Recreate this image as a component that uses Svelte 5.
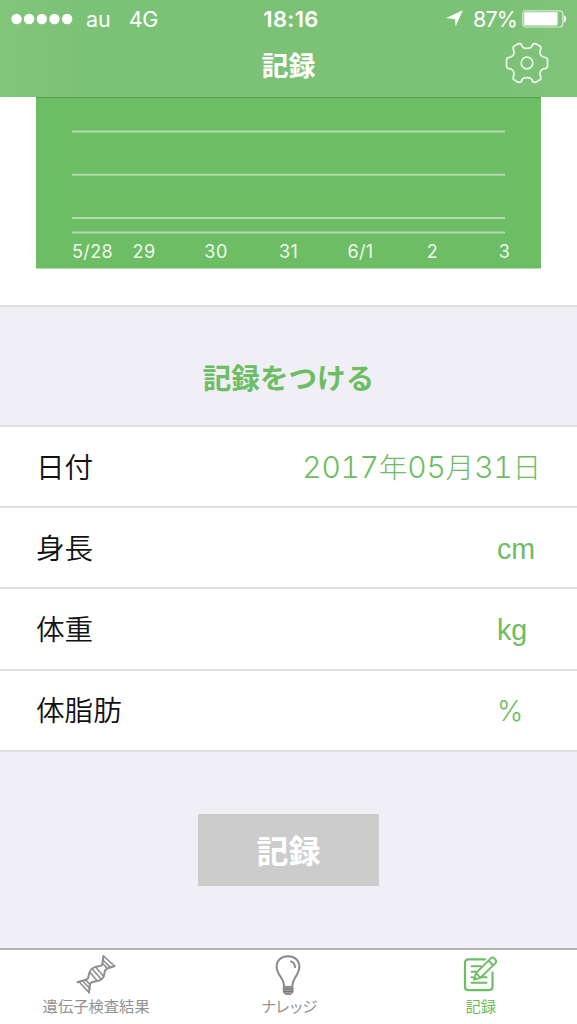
<script lang="ts">
  const gridLines = [34.5, 77.7, 120.9, 135.5]

  const days = [
    { label: '5/28', x: 56.5 },
    { label: '29', x: 108 },
    { label: '30', x: 180 },
    { label: '31', x: 252.5 },
    { label: '6/1', x: 324.5 },
    { label: '2', x: 396.5 },
    { label: '3', x: 468.5 },
  ]

  const date = [['2017', '年'], ['05', '月'], ['31', '日']]

  const fields = [
    { label: '身長', unit: 'cm' },
    { label: '体重', unit: 'kg' },
    { label: '体脂肪', unit: '%' },
  ]
</script>

<div class="screen">
  <header>
    <div class="status">
      <div class="left">
        <svg width="62" height="12" viewBox="0 0 62 12" fill="#fff">
          {#each [5.5, 18.1, 30.8, 43.5, 56.1] as cx}
            <circle {cx} cy="6" r="5.2" />
          {/each}
        </svg>
        <span class="carrier">au</span>
        <span class="network">4G</span>
      </div>
      <span class="time">18:16</span>
      <div class="right">
        <svg width="17" height="17" viewBox="0 0 17 17" fill="#fff">
          <path d="M16.8.2 9.6 16.6 9 9.2.2 8z" />
        </svg>
        <span class="percent">87%</span>
        <svg width="45" height="18" viewBox="0 0 45 18">
          <rect x=".8" y=".8" width="40" height="16.2" rx="3" fill="none" stroke="#d9eed7" stroke-width="1.2" />
          <rect x="2.2" y="2.2" width="33.4" height="13.4" rx="1" fill="#fff" />
          <path d="M41.8 5.3c3 .6 3 6.6 0 7.2z" fill="#fff" />
        </svg>
      </div>
    </div>
    <div class="nav">
      <h1>記録</h1>
      <svg class="gear" width="44" height="44" viewBox="-22 -22 44 44" fill="none" stroke="#eaf6e9" stroke-width="1.7" stroke-linejoin="round">
        <circle r="5.8" />
        <path d="M-13.8-16.2 -8.5-19.4 -5.8-18.8C-5-13.2 5-13.2 5.8-18.8L8.5-19.4 13.8-16.2 13.7-13.8C11.4-8.3 15-5.2 19.3-5.3L20.5-3.5V3.5L19.3 5.3C15 5.2 11.4 8.3 13.7 13.8L13.8 16.2 8.5 19.4 5.8 18.8C5 13.2-5 13.2-5.8 18.8L-8.5 19.4-13.8 16.2-13.7 13.8C-11.4 8.3-15 5.2-19.3 5.3L-20.5 3.5V-3.5L-19.3-5.3C-15-5.2-11.4-8.3-13.7-13.8z" />
      </svg>
    </div>
  </header>

  <section class="chart">
    <svg width="505" height="171.5" viewBox="0 0 505 171.5">
      <rect width="505" height="171.5" fill="#6cbd63" />
      <rect width="505" height="1.2" fill="#5a9e53" />
      {#each gridLines as y}
        <line x1="36" x2="469" y1={y} y2={y} />
      {/each}
      {#each days as day}
        <text x={day.x} y="161">{day.label}</text>
      {/each}
    </svg>
  </section>

  <h2>記録をつける</h2>

  <div class="form">
    <div class="row">
      <span>日付</span>
      <span class="date">{#each date as [num, kanji]}<b>{num}</b>{kanji}{/each}</span>
    </div>
    {#each fields as field}
      <div class="row">
        <span>{field.label}</span>
        <span class="unit" class:thin={field.unit === '%'}>{field.unit}</span>
      </div>
    {/each}
  </div>

  <div class="action">
    <button>記録</button>
  </div>

  <nav class="tabs">
    <div class="tab">
      <svg width="42" height="42" viewBox="0 0 42 42" fill="none" stroke="#8d8d8d" stroke-width="2" stroke-linecap="round">
        <path d="M2.5 28.2C12 25 13 27.5 14 20C15 14 19 12.5 25 12C29 11.5 27 7 28.5 2" />
        <path d="M14 38.5C15 31 13.5 28 20 27.5C26 27 29 25 29.5 19C30 13.5 34 14.5 39.5 12" />
        <path d="M28.5 2 39.5 12M27.8 6 35.5 13.3M27.8 9.8 32 13.8M21 13.5 28.7 22.5M17.3 15 26 25M14.8 18 21.8 26.5M8 27.5 15 34.5M11 26.5 15.3 30.7M4.5 28.2 14 38.5" stroke-width="1.6" />
      </svg>
      <span>遺伝子検査結果</span>
    </div>
    <div class="tab">
      <svg width="26" height="42" viewBox="0 0 26 42" fill="none" stroke="#858585" stroke-width="1.9">
        <path d="M9 32C9 24 1.6 21 1.6 12.5C1.6 6 6.5 2.2 13 2.2S24.4 6 24.4 12.5C24.4 21 17.4 24 17.4 32" />
        <path d="M15.3 7.2C18.5 8 20 10.5 20.2 14" stroke-width="1.8" />
        <path d="M8.3 32.4H18V38.5L15.5 40.5H11L8.3 38.5z" fill="#999" stroke-width="1" />
        <path d="M8 34.8H18.3M8 37.4H18.3" stroke="#777" stroke-width="1" />
      </svg>
      <span class="kana">ナレッジ</span>
    </div>
    <div class="tab active">
      <svg width="36" height="42" viewBox="0 0 36 42" fill="none" stroke="#6cbd63" stroke-width="2.2" stroke-linecap="round" stroke-linejoin="round">
        <path d="M22 5.3H5.5C3.2 5.3 2 6.5 2 8.8V32.7C2 35 3.2 36.2 5.5 36.2H26C28.2 36.2 29.5 35 29.5 32.7V18.5" />
        <path d="M11 25.5 13 19.2 28 4.2C29.9 2.3 34.7 6.5 32.7 8.9L17.5 23.8zM25.5 6.7 30.3 11.3M13 19.2 17.5 23.8" stroke-width="1.9" />
        <path d="M8.5 12.3H18M8.5 17.8H13M8.5 23.2H10M19.5 23.2H23.5M8.5 28.7H23.5" stroke-width="1.9" />
      </svg>
      <span>記録</span>
    </div>
  </nav>
</div>

<style>
  :global(body) {
    margin: 0;
  }

  .screen {
    display: flex;
    flex-direction: column;
    width: 577px;
    height: 1024px;
    overflow: hidden;
    background: #efeff5;
    font-family: Inter, "Noto Sans CJK JP", sans-serif;
  }

  header {
    flex: none;
    height: 97px;
    color: #fff;
    background: linear-gradient(90deg, #82c57b 0, #7cc276 75px, #7cc276 500px, #80c47a 100%);
  }

  .status {
    display: grid;
    grid-template-columns: 1fr auto 1fr;
    align-items: center;
    height: 37px;
    padding: 0 10px 0 11px;
    font-size: 21.5px;
  }

  .left,
  .right {
    display: flex;
    align-items: center;
  }

  .carrier {
    margin-left: 13px;
  }

  .network {
    margin-left: 18px;
    letter-spacing: -0.5px;
  }

  .time {
    margin-left: 4px;
    font-weight: 600;
    font-size: 22px;
    letter-spacing: 0.3px;
  }

  .right {
    justify-content: flex-end;
  }

  .percent {
    margin: 0 5px 0 10px;
    letter-spacing: -0.9px;
  }

  .nav {
    display: grid;
    grid-template-columns: 1fr auto 1fr;
    align-items: center;
    height: 51px;
    padding-right: 28px;
  }

  h1 {
    grid-column: 2;
    margin: 9px -28px 0 0;
    font-size: 27px;
    line-height: 40px;
    font-weight: 700;
  }

  .gear {
    justify-self: end;
  }

  .chart {
    flex: none;
    box-sizing: border-box;
    height: 210px;
    padding: 0 36px;
    background: #fff;
    border-bottom: 2px solid #dfdfe1;
  }

  .chart svg {
    display: block;
  }

  .chart line {
    stroke: #b2dcae;
    stroke-width: 2;
  }

  .chart text {
    fill: #eff8ee;
    font-size: 18px;
    letter-spacing: 0.4px;
    text-anchor: middle;
  }

  h2 {
    flex: none;
    height: 118.3px;
    margin: 0;
    color: #6cbd63;
    font-size: 28.6px;
    line-height: 143px;
    font-weight: 700;
    text-align: center;
  }

  .form {
    flex: none;
    border-top: 2px solid #dfdfe1;
  }

  .row {
    display: flex;
    align-items: center;
    justify-content: space-between;
    box-sizing: border-box;
    height: 81.1px;
    padding: 0 36px;
    background: #fff;
    border-bottom: 2px solid #dfdfe1;
    color: #111;
    font-size: 28.6px;
    line-height: 40px;
    font-weight: 350;
  }

  .row span {
    margin-top: 2px;
  }

  .date,
  .unit {
    color: #6cbd63;
  }

  .date {
    font-weight: 300;
  }

  .date b {
    font-size: 30px;
    font-weight: 300;
    letter-spacing: -0.3px;
    font-variant-numeric: tabular-nums;
  }

  .row .unit {
    width: 44px;
    margin-top: 2px;
    font-family: "Liberation Sans", sans-serif;
    font-size: 28.6px;
  }

  .row .thin {
    font-family: Inter, sans-serif;
    font-size: 28px;
    font-weight: 300;
  }

  .action {
    display: flex;
    justify-content: center;
    flex: 1;
    padding-top: 62px;
  }

  button {
    width: 181px;
    height: 72px;
    padding: 0 0 2px;
    border: 0;
    background: #ccc;
    color: #fff;
    font-family: inherit;
    font-size: 32px;
    font-weight: 700;
  }

  .tabs {
    display: flex;
    flex: none;
    box-sizing: border-box;
    height: 76px;
    border-top: 2px solid #b3b3b5;
    background: #fff;
  }

  .tab {
    display: flex;
    flex: 1;
    flex-direction: column;
    align-items: center;
    padding-top: 4px;
    color: #929292;
    font-size: 15.3px;
    line-height: 22px;
  }

  .kana {
    letter-spacing: -1.6px;
  }

  .active {
    color: #6cbd63;
  }
</style>
